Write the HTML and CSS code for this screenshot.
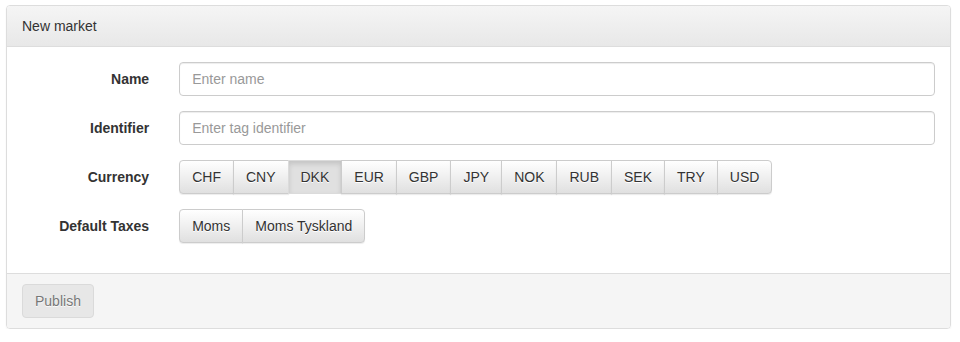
FILE: index.html
```html
<!DOCTYPE html>
<html lang="en">
<head>
  <meta charset="UTF-8">
  <title>New market</title>
  <link rel="stylesheet" href="styles.css">
</head>
<body>
  <div class="panel">
    <div class="panel-heading">New market</div>
    <div class="panel-body">
      <div class="form-group">
        <label class="control-label" for="name">Name</label>
        <div class="control">
          <input type="text" class="form-control" id="name" placeholder="Enter name">
        </div>
      </div>
      <div class="form-group">
        <label class="control-label" for="identifier">Identifier</label>
        <div class="control">
          <input type="text" class="form-control" id="identifier" placeholder="Enter tag identifier">
        </div>
      </div>
      <div class="form-group">
        <label class="control-label">Currency</label>
        <div class="control">
          <div class="btn-group">
            <button class="btn">CHF</button>
            <button class="btn">CNY</button>
            <button class="btn active">DKK</button>
            <button class="btn">EUR</button>
            <button class="btn">GBP</button>
            <button class="btn">JPY</button>
            <button class="btn">NOK</button>
            <button class="btn">RUB</button>
            <button class="btn">SEK</button>
            <button class="btn">TRY</button>
            <button class="btn">USD</button>
          </div>
        </div>
      </div>
      <div class="form-group">
        <label class="control-label">Default Taxes</label>
        <div class="control">
          <div class="btn-group">
            <button class="btn">Moms</button>
            <button class="btn">Moms Tyskland</button>
          </div>
        </div>
      </div>
    </div>
    <div class="panel-footer">
      <button class="btn btn-publish" disabled>Publish</button>
    </div>
  </div>
</body>
</html>
```

FILE: styles.css
```css
* {
    box-sizing: border-box;
}

body {
    margin: 0;
    padding: 5px 9px 0 6px;
    font-family: "Liberation Sans", Arial, sans-serif;
    font-size: 14px;
    line-height: 20px;
    color: #333;
    background: #fff;
}

.panel {
    border: 1px solid #ddd;
    border-radius: 4px;
    box-shadow: 0 1px 2px rgba(0, 0, 0, 0.05);
    overflow: hidden;
}

.panel-heading {
    padding: 10px 15px;
    background: linear-gradient(to bottom, #f5f5f5 0, #e8e8e8 100%);
    border-bottom: 1px solid #ddd;
}

.panel-body {
    padding: 15px 0;
}

.form-group {
    display: flex;
    margin-bottom: 15px;
}

.control-label {
    width: 16.6667%;
    padding: 7px 15px 0;
    text-align: right;
    font-weight: bold;
}

.control {
    width: 83.3333%;
    padding: 0 15px;
}

.form-control {
    display: block;
    width: 100%;
    height: 34px;
    padding: 6px 12px;
    font: inherit;
    color: #555;
    border: 1px solid #ccc;
    border-radius: 4px;
    box-shadow: inset 0 1px 1px rgba(0, 0, 0, 0.075);
}

.form-control::placeholder {
    color: #999;
}

.btn-group {
    display: inline-flex;
}

.btn {
    height: 34px;
    padding: 6px 12px;
    font: inherit;
    color: #333;
    text-shadow: 0 1px 0 #fff;
    border: 1px solid #ccc;
    border-radius: 4px;
    background-color: #fff;
    background-image: linear-gradient(to bottom, #fff 0, #e0e0e0 100%);
    box-shadow: inset 0 1px 0 rgba(255, 255, 255, 0.15), 0 1px 1px rgba(0, 0, 0, 0.075);
    cursor: pointer;
}

.btn-group .btn {
    border-radius: 0;
}

.btn-group .btn + .btn {
    margin-left: -1px;
}

.btn-group .btn:first-child {
    border-radius: 4px 0 0 4px;
}

.btn-group .btn:last-child {
    border-radius: 0 4px 4px 0;
}

.btn.active {
    background-color: #e0e0e0;
    background-image: none;
    border-color: #dbdbdb;
    box-shadow: inset 0 3px 5px rgba(0, 0, 0, 0.125);
}

.panel-footer {
    padding: 10px 15px;
    background: #f5f5f5;
    border-top: 1px solid #ddd;
}

.btn-publish {
    background-color: #e0e0e0;
    background-image: none;
    border-color: #ccc;
    box-shadow: none;
    opacity: 0.65;
    cursor: not-allowed;
}
```
